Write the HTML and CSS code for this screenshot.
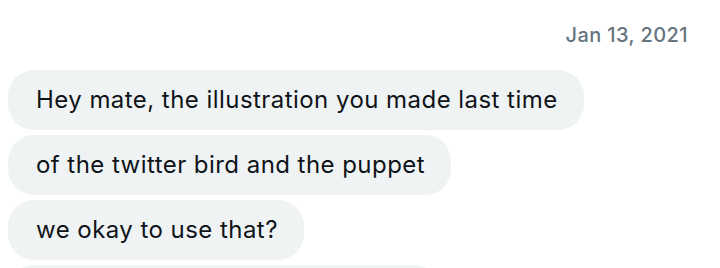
FILE: index.html
```html
<!DOCTYPE html>
<html lang="en">
<head>
    <meta charset="UTF-8" />
    <title>Messages</title>
    <link rel="stylesheet" href="styles.css">
</head>
<body>
    <div class="thread">
        <div class="date">Jan 13, 2021</div>

        <div class="bubble">Hey mate, the illustration you made last time</div>
        <div class="bubble">of the twitter bird and the puppet</div>
        <div class="bubble">we okay to use that?</div>
        <div class="bubble">we'd like to feature it in a thread</div>
    </div>
</body>
</html>
```

FILE: styles.css
```css
body {
    margin: 0;
    background: #fff;
    font-family: Inter, "Noto Sans", sans-serif;
    color: #0f1419;
    overflow: hidden;
    height: 268px;
}
.thread {
    display: flex;
    flex-direction: column;
    align-items: flex-start;
    gap: 5px;
    padding: 0 8px;
}
.date {
    align-self: flex-end;
    margin: 23px 24px 18px 0;
    font-size: 20px;
    font-weight: 500;
    letter-spacing: 0.4px;
    color: #66757f;
    line-height: 24px;
}
.bubble {
    background: #eff3f4;
    border-radius: 26px;
    padding: 0 26px 0 28px;
    height: 60px;
    line-height: 60px;
    font-size: 24px;
    letter-spacing: 0.45px;
    white-space: nowrap;
}
```
